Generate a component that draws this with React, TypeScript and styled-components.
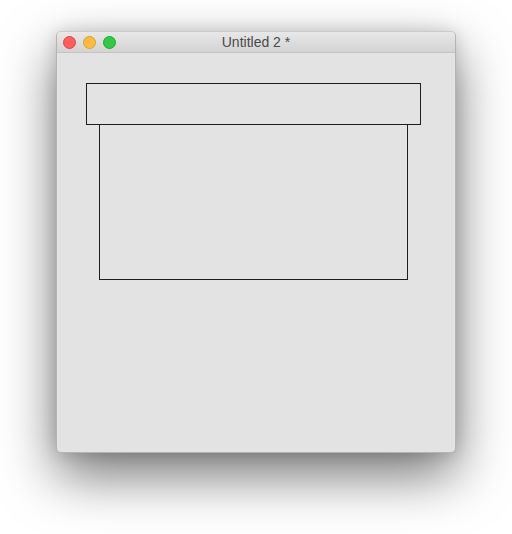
import React from "react";
import styled, { createGlobalStyle } from "styled-components";

const Global = createGlobalStyle`
  html, body { margin: 0; padding: 0; background: #ffffff; }
  body { font-family: "Liberation Sans", Arial, sans-serif; }
`;

const Stage = styled.div`
  padding: 31px 0 0 56px;
  width: 512px;
  height: 534px;
  box-sizing: border-box;
  overflow: hidden;
`;

const Window = styled.div`
  width: 400px;
  height: 422px;
  box-sizing: border-box;
  border: 1px solid #b4b4b4;
  border-top-color: #cbcbcb;
  border-radius: 5px;
  background: #e3e3e3;
  box-shadow: 0 22px 54px rgba(0, 0, 0, 0.55), 0 0 16px rgba(0, 0, 0, 0.14);
  display: flex;
  flex-direction: column;
  overflow: hidden;
`;

const TitleBar = styled.div`
  height: 21px;
  box-sizing: border-box;
  border-bottom: 1px solid #c4c4c4;
  background: linear-gradient(#e9e8e9, #d4d3d4);
  display: grid;
  grid-template-columns: 1fr auto 1fr;
  align-items: center;
`;

const Lights = styled.div`
  display: flex;
  gap: 7px;
  padding-left: 6px;
`;

const Light = styled.span<{ $fill: string; $edge: string }>`
  width: 13px;
  height: 13px;
  border-radius: 50%;
  box-sizing: border-box;
  background: ${(p) => p.$fill};
  border: 0.5px solid ${(p) => p.$edge};
`;

const Title = styled.div`
  font-family: "Liberation Sans", Arial, sans-serif;
  font-size: 14px;
  color: #4a4a4a;
  line-height: 20px;
  white-space: nowrap;
`;

const Content = styled.div`
  flex: 1;
  padding: 30px 0 0 29px;
  display: flex;
  flex-direction: column;
  align-items: flex-start;
`;

const Lid = styled.div`
  width: 335px;
  height: 42px;
  box-sizing: border-box;
  border: 1px solid #1e1e1e;
`;

const Body = styled.div`
  width: 309px;
  height: 156px;
  margin: -1px 0 0 13px;
  box-sizing: border-box;
  border: 1px solid #1e1e1e;
`;

export default function App() {
  return (
    <>
      <Global />
      <Stage>
        <Window>
          <TitleBar>
            <Lights>
              <Light $fill="#fc605b" $edge="#e0443e" />
              <Light $fill="#fdbc40" $edge="#dea123" />
              <Light $fill="#34c84a" $edge="#1aab29" />
            </Lights>
            <Title>Untitled 2 *</Title>
            <span />
          </TitleBar>
          <Content>
            <Lid />
            <Body />
          </Content>
        </Window>
      </Stage>
    </>
  );
}
